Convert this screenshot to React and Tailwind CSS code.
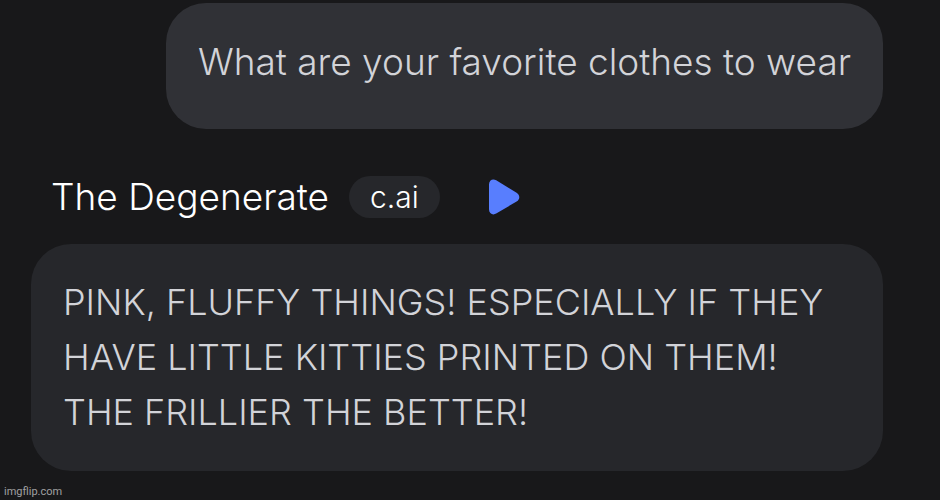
import React from 'react'

const messages = {
    user: "What are your favorite clothes to wear",
    character: "PINK, FLUFFY THINGS! ESPECIALLY IF THEY HAVE LITTLE KITTIES PRINTED ON THEM! THE FRILLIER THE BETTER!",
};

const App = () => {
    return (
        <main className="flex flex-col min-h-screen bg-[#18181a] font-['Inter',sans-serif] font-light text-[#d2d3d8]">
            <section className="flex flex-col pl-[31px] pr-[57px] pt-[3px]">
                <div className="self-end rounded-[40px] bg-[#303136] px-8 pt-8 pb-10">
                    <p className="text-[37px] leading-[54px]">{messages.user}</p>
                </div>

                <header className="flex items-center mt-[47px] pl-5 text-white">
                    <h1 className="text-[37px] leading-[42px]">The Degenerate</h1>
                    <span className="ml-5 rounded-full bg-[#26272b] px-[21px] text-[30px] leading-[42px]">c.ai</span>
                    <button type="button" aria-label="Play message" className="ml-12">
                        <svg width="32" height="38" viewBox="0 0 32 38" fill="#587efe" aria-hidden="true">
                            <path d="M1 6.5C1 2.2 4.8.2 8.2 2.3L28.6 14.8C32.2 17.2 32.2 21.2 28.6 23.5L8.2 35.6C4.8 37.6 1 35.6 1 31.3Z" />
                        </svg>
                    </button>
                </header>

                <div className="mt-[26px] rounded-[40px] bg-[#26272b] px-8 py-[31px]">
                    <p className="text-[36px] leading-[55px]">{messages.character}</p>
                </div>
            </section>

            <footer className="mt-auto px-1 pb-0.5 text-[11px] leading-3 font-['Roboto',sans-serif] font-normal text-[#a0a0a2]">imgflip.com</footer>
        </main>
    )
}

export default App
